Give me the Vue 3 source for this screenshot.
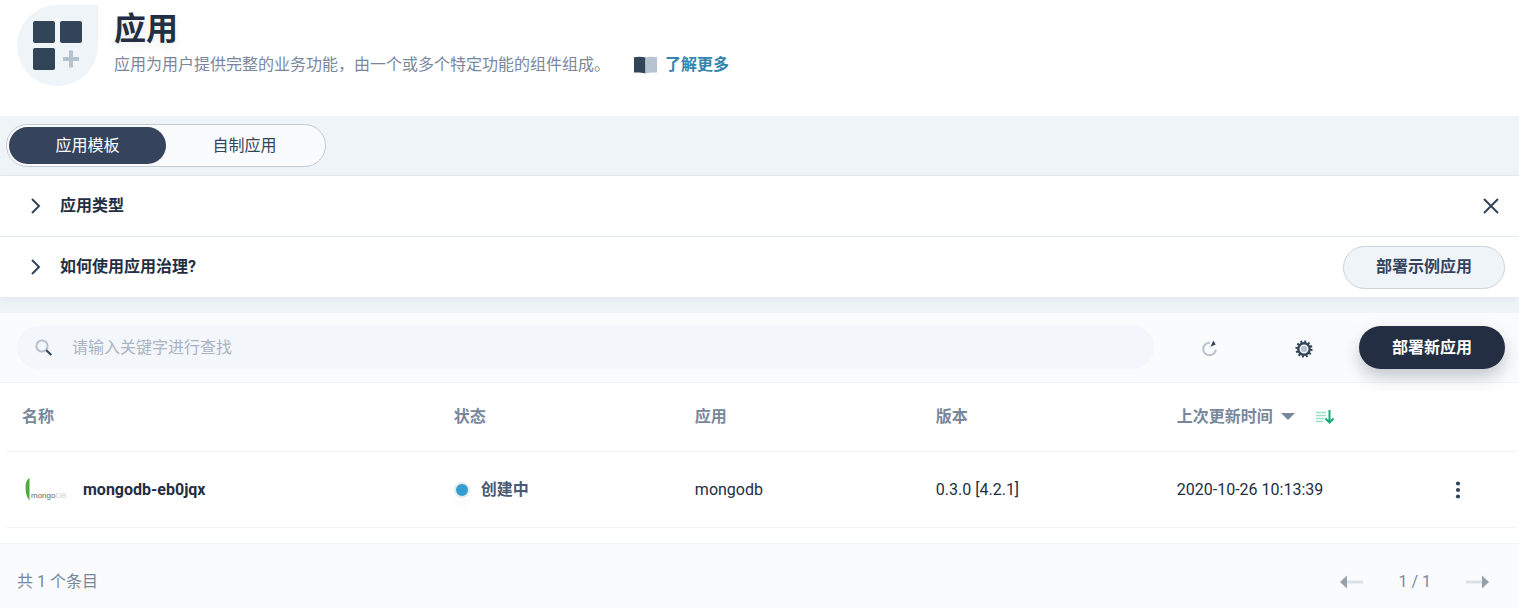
<script setup>
import { ref } from 'vue'

const activeTab = ref('template')
const keyword = ref('')
const tabs = [
  { id: 'template', label: '应用模板' },
  { id: 'custom', label: '自制应用' },
]
const apps = [
  { name: 'mongodb-eb0jqx', status: '创建中', app: 'mongodb', version: '0.3.0 [4.2.1]', updated: '2020-10-26 10:13:39' },
]
</script>

<template>
  <main class="page">
    <header class="banner">
      <div class="banner-icon">
        <svg width="50" height="50" viewBox="0 0 50 50" aria-hidden="true">
          <g fill="#324558">
            <rect x="0" y="0" width="22" height="22" rx="2" />
            <rect x="27" y="0" width="22" height="22" rx="2" />
            <rect x="0" y="27" width="22" height="22" rx="2" />
          </g>
          <path d="M38 29.500v17M30 38h16" stroke="#b6c2cd" stroke-width="4" />
        </svg>
      </div>
      <div class="banner-text">
        <h1>应用</h1>
        <p>
          <span>应用为用户提供完整的业务功能，由一个或多个特定功能的组件组成。</span>
          <a href="#" class="more-link">
            <svg width="24" height="18" viewBox="0 0 24 18" aria-hidden="true">
              <path d="M0 1.200C4 0.500 8 0.500 11.500 1.500V17.500C8 16.500 4 16.300 0 16.500Z" fill="#324558" />
              <path d="M23 1.200C19 0.500 15 0.500 11.500 1.500V17.500C15 16.500 19 16.300 23 16.500Z" fill="#b6c2cd" />
            </svg>
            了解更多
          </a>
        </p>
      </div>
    </header>

    <nav class="tabs-band">
      <div class="tabs">
        <button
          v-for="tab in tabs"
          :key="tab.id"
          type="button"
          :class="['tab', { active: tab.id === activeTab }]"
          @click="activeTab = tab.id"
        >{{ tab.label }}</button>
      </div>
    </nav>

    <section class="guides">
      <div class="guide">
        <button type="button" class="guide-toggle">
          <svg width="12" height="18" viewBox="0 0 12 18" aria-hidden="true">
            <path d="M2 2L9 9L2 16" fill="none" stroke="#324558" stroke-width="2" />
          </svg>
          应用类型
        </button>
        <button type="button" class="close" aria-label="关闭">
          <svg width="16" height="16" viewBox="0 0 16 16" aria-hidden="true">
            <path d="M1 1L15 15M15 1L1 15" stroke="#324558" stroke-width="2" />
          </svg>
        </button>
      </div>
      <div class="guide">
        <button type="button" class="guide-toggle">
          <svg width="12" height="18" viewBox="0 0 12 18" aria-hidden="true">
            <path d="M2 2L9 9L2 16" fill="none" stroke="#324558" stroke-width="2" />
          </svg>
          如何使用应用治理?
        </button>
        <button type="button" class="pill light">部署示例应用</button>
      </div>
    </section>

    <section class="list">
      <div class="toolbar">
        <label class="search">
          <svg width="18" height="18" viewBox="0 0 18 18" aria-hidden="true">
            <circle cx="7" cy="7" r="5.600" fill="none" stroke="#b6c2cd" stroke-width="2" />
            <path d="M11.300 11.300L16.300 16" stroke="#324558" stroke-width="2" />
          </svg>
          <input v-model="keyword" type="text" placeholder="请输入关键字进行查找" aria-label="请输入关键字进行查找" />
        </label>
        <div class="tools">
          <button type="button" class="tool" aria-label="刷新">
            <svg width="16" height="18" viewBox="0 0 16 18" aria-hidden="true">
              <path d="M8 2.700A6.300 6.300 0 1 0 13.800 9.500" fill="none" stroke="#b6c2cd" stroke-width="2" />
              <path d="M8.500 6.800L11.300 0.500L13.700 4.500Z" fill="#324558" />
            </svg>
          </button>
          <button type="button" class="tool" aria-label="设置">
            <svg width="18" height="18" viewBox="0 0 18 18" aria-hidden="true">
              <circle cx="9" cy="9" r="7.400" fill="none" stroke="#324558" stroke-width="2.400" stroke-dasharray="1.937 1.937" />
              <circle cx="9" cy="9" r="5.700" fill="none" stroke="#324558" stroke-width="2.400" />
              <circle cx="9" cy="9" r="3.200" fill="#b6c2cd" />
            </svg>
          </button>
        </div>
        <button type="button" class="pill dark">部署新应用</button>
      </div>

      <div class="table-wrap">
        <table>
          <colgroup>
            <col class="col-name" />
            <col class="col-data" />
            <col class="col-data" />
            <col class="col-data" />
            <col class="col-data" />
            <col />
          </colgroup>
          <thead>
            <tr>
              <th>名称</th>
              <th>状态</th>
              <th>应用</th>
              <th>版本</th>
              <th>
                <button type="button" class="sort">
                  上次更新时间
                  <svg class="caret" width="14" height="8" viewBox="0 0 14 8" aria-hidden="true">
                    <path d="M0 0H14L7 7Z" fill="#79879c" />
                  </svg>
                  <svg class="order" width="18" height="14" viewBox="0 0 18 14" aria-hidden="true">
                    <path d="M0 2.500H10M0 5.500H10M0 8.500H8M0 11.500H7" stroke="#98e0c8" stroke-width="1.500" />
                    <path d="M13.500 0V12M9.500 8.500L13.500 12.500L17.500 8.500" fill="none" stroke="#15ac77" stroke-width="2" />
                  </svg>
                </button>
              </th>
              <th></th>
            </tr>
          </thead>
          <tbody>
            <tr v-for="item in apps" :key="item.name">
              <td>
                <a href="#" class="app-name">
                  <svg class="app-logo" width="40" height="40" viewBox="0 0 40 40" aria-hidden="true">
                    <path d="M7.500 8C3.500 10 3 16 4 23C4.600 26 6 29 7.500 30.500Z" fill="#4daa40" />
                    <text x="9" y="28" class="logo-text">mongo<tspan class="logo-light">DB</tspan></text>
                  </svg>
                  {{ item.name }}
                </a>
              </td>
              <td><span class="status"><i class="dot"></i>{{ item.status }}</span></td>
              <td>{{ item.app }}</td>
              <td>{{ item.version }}</td>
              <td>{{ item.updated }}</td>
              <td class="actions">
                <button type="button" class="menu" aria-label="更多操作">
                  <svg width="6" height="18" viewBox="0 0 6 18" aria-hidden="true">
                    <g fill="#324558">
                      <circle cx="3" cy="2.500" r="2.100" />
                      <circle cx="3" cy="9" r="2.100" />
                      <circle cx="3" cy="15.500" r="2.100" />
                    </g>
                  </svg>
                </button>
              </td>
            </tr>
          </tbody>
        </table>
      </div>

      <footer class="footer">
        <span>共 1 个条目</span>
        <div class="pager">
          <button type="button" aria-label="上一页">
            <svg width="24" height="14" viewBox="0 0 24 14" aria-hidden="true">
              <path d="M7 7H23" stroke="#dae2e8" stroke-width="3" />
              <path d="M0 7L7 0.500V13.500Z" fill="#96a1ac" />
            </svg>
          </button>
          <span>1 / 1</span>
          <button type="button" aria-label="下一页">
            <svg width="24" height="14" viewBox="0 0 24 14" aria-hidden="true">
              <path d="M1 7H17" stroke="#dae2e8" stroke-width="3" />
              <path d="M24 7L17 0.500V13.500Z" fill="#96a1ac" />
            </svg>
          </button>
        </div>
      </footer>
    </section>
  </main>
</template>

<style>
body {
  background: #fafbfd;
}
</style>

<style scoped>
.page {
  font-family: Roboto, "Noto Sans CJK SC", sans-serif;
  font-size: 16px;
  line-height: 24px;
  color: #242e42;
  background: #eff4f9;
}
* {
  box-sizing: border-box;
}
svg {
  display: block;
  flex: none;
}
button {
  font: inherit;
  color: inherit;
  background: none;
  border: 0;
  padding: 0;
  cursor: pointer;
}
a {
  text-decoration: none;
}
.banner {
  display: flex;
  gap: 16px;
  padding: 5px 17px 29px;
  background: #fff;
}
.banner-icon {
  display: flex;
  align-items: center;
  justify-content: center;
  width: 81px;
  height: 81px;
  border-radius: 50% 0 50% 50%;
  background: #eff4f8;
}
h1 {
  margin: 4px 0 0;
  font-size: 32px;
  line-height: 40px;
  font-weight: 700;
  text-shadow: 0 4px 8px rgba(36, 46, 66, 0.1);
}
.banner p {
  display: flex;
  flex-wrap: wrap;
  gap: 24px;
  margin: 4px 0 0;
  padding-bottom: 10px;
  color: #79879c;
}
.more-link {
  display: flex;
  align-items: center;
  gap: 7px;
  font-weight: 700;
  color: #3385b0;
}
.tabs-band {
  padding: 8px 6px;
}
.tabs {
  display: flex;
  width: 320px;
  height: 43px;
  padding: 2px;
  border: 1px solid #c1c9d1;
  border-radius: 22px;
  background: #fafbfd;
}
.tab {
  flex: 1;
  border-radius: 20px;
  color: #36435c;
}
.tab.active {
  background: #36435c;
  color: #fff;
}
.guides {
  background: #fff;
  box-shadow: 0 4px 8px rgba(36, 46, 66, 0.06);
}
.guide {
  display: flex;
  align-items: center;
  justify-content: space-between;
  height: 61px;
  padding: 0 14px 0 30px;
  border-top: 1px solid #e3e9ef;
}
.guide-toggle {
  display: flex;
  align-items: center;
  gap: 18px;
  font-weight: 700;
}
.close {
  padding: 6px;
}
.pill {
  height: 43px;
  padding: 0 32px;
  border-radius: 22px;
  font-weight: 700;
}
.pill.light {
  border: 1px solid #ccd3db;
  background: #eff4f9;
  color: #36435c;
}
.pill.dark {
  padding: 0 33px;
  background: #242e42;
  color: #fff;
  box-shadow: 0 8px 16px rgba(36, 46, 66, 0.25);
}
.list {
  position: relative;
  margin-top: 16px;
  background: #fff;
}
.toolbar {
  display: flex;
  align-items: center;
  height: 70px;
  padding: 0 14px 0 17px;
  border-bottom: 1px solid #eff4f9;
  background: #fafbfd;
}
.search {
  display: flex;
  flex: 1;
  align-items: center;
  gap: 19px;
  height: 43px;
  padding: 0 18px;
  border-radius: 22px;
  background: #f3f6fb;
}
.search input {
  flex: 1;
  min-width: 0;
  padding: 0;
  border: 0;
  outline: 0;
  background: none;
  font: inherit;
  color: #36435c;
}
.search input::placeholder {
  color: #abb4c3;
  opacity: 1;
}
.tools {
  display: flex;
  gap: 62px;
  padding: 2px 39px 0 40px;
}
.tool {
  display: flex;
  align-items: center;
  justify-content: center;
  width: 32px;
  height: 32px;
}
.table-wrap {
  padding: 0 3px 15px 6px;
}
table {
  width: 100%;
  table-layout: fixed;
  border-collapse: separate;
  border-spacing: 0;
}
.col-name {
  width: 28.6%;
}
.col-data {
  width: 15.96%;
}
th,
td {
  padding: 0 16px;
  border-bottom: 1px solid #f1f3f5;
  text-align: left;
}
th {
  height: 69px;
  color: #79879c;
  font-weight: 700;
}
td {
  height: 76px;
}
.sort {
  display: flex;
  align-items: center;
  font-weight: 700;
}
.caret {
  margin-left: 8px;
}
.order {
  margin-left: 21px;
}
.app-name {
  display: flex;
  align-items: center;
  gap: 21px;
  font-weight: 700;
  color: #242e42;
}
.app-logo {
  overflow: visible;
}
.logo-text {
  font-family: "Liberation Sans Narrow", "Liberation Sans", sans-serif;
  font-size: 8px;
  font-weight: 400;
  fill: #6b6762;
}
.logo-light {
  fill: #d5d3d0;
}
.status {
  display: flex;
  align-items: center;
  gap: 11px;
  font-weight: 700;
  color: #4a5974;
}
.dot {
  width: 16px;
  height: 16px;
  border: 2px solid #e6eaee;
  border-radius: 50%;
  background: #329dce;
  box-shadow: 0 8px 16px rgba(36, 46, 66, 0.03);
}
.actions {
  padding-left: 49px;
}
.menu {
  display: flex;
  padding: 4px;
}
.footer {
  display: flex;
  align-items: center;
  justify-content: space-between;
  height: 65px;
  padding: 11px 30px 0 17px;
  border-top: 1px solid #eff4f9;
  background: #fafbfd;
  color: #79879c;
}
.pager {
  display: flex;
  align-items: center;
  gap: 34px;
}
</style>
